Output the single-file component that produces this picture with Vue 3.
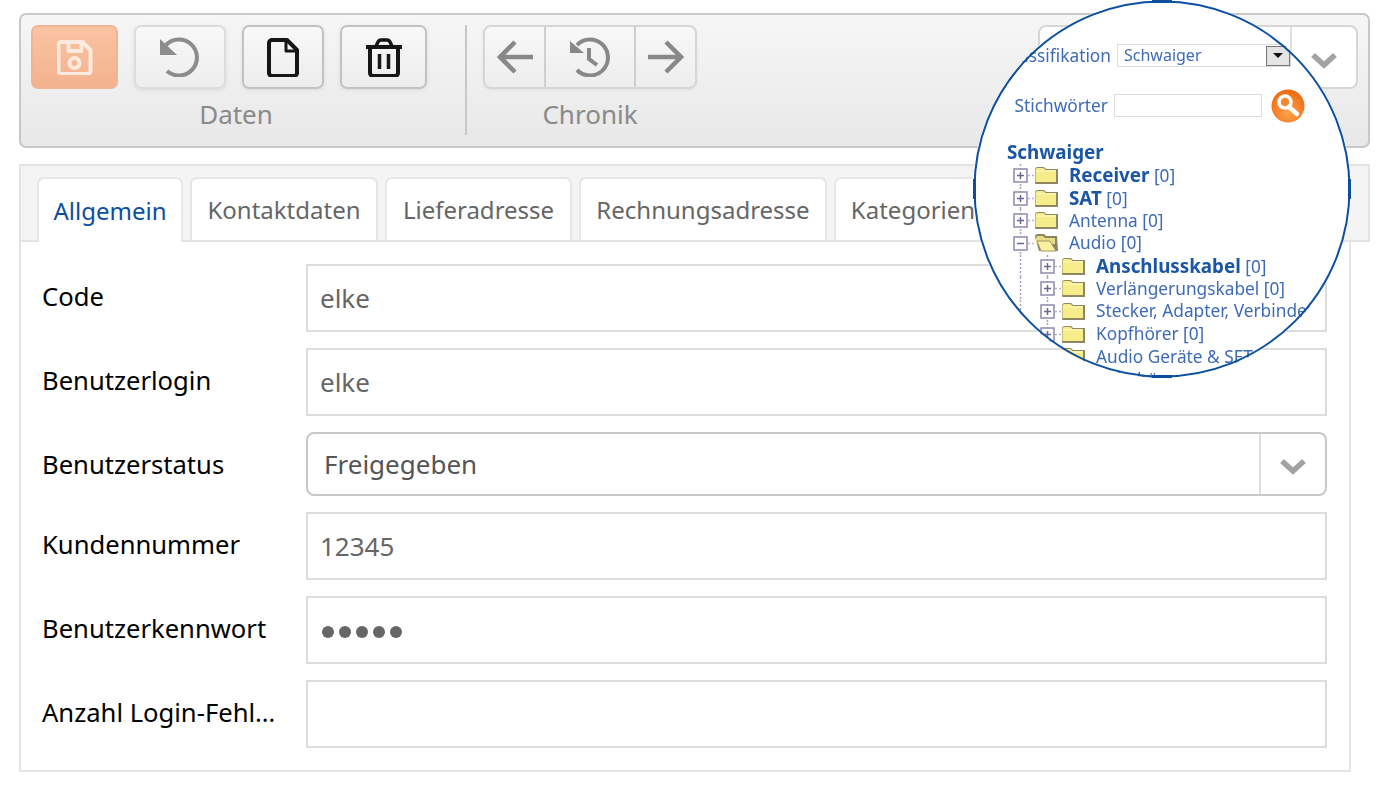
<script setup>
const tabs = [
  { label: 'Allgemein', w: 146, active: true },
  { label: 'Kontaktdaten', w: 188 },
  { label: 'Lieferadresse', w: 187 },
  { label: 'Rechnungsadresse', w: 248 },
  { label: 'Kategorien', w: 158 },
]
const rows = [
  { label: 'Code', value: 'elke', type: 'text' },
  { label: 'Benutzerlogin', value: 'elke', type: 'text' },
  { label: 'Benutzerstatus', value: 'Freigegeben', type: 'select' },
  { label: 'Kundennummer', value: '12345', type: 'text' },
  { label: 'Benutzerkennwort', value: '12345', type: 'password' },
  { label: 'Anzahl Login-Fehlversuche', value: '', type: 'text' },
]
const tree = [
  { name: 'Receiver', level: 0, bold: true },
  { name: 'SAT', level: 0, bold: true },
  { name: 'Antenna', level: 0 },
  { name: 'Audio', level: 0, open: true },
  { name: 'Anschlusskabel', level: 1, bold: true },
  { name: 'Verlängerungskabel', level: 1 },
  { name: 'Stecker, Adapter, Verbinder', level: 1, noCount: true },
  { name: 'Kopfhörer', level: 1 },
  { name: 'Audio Geräte & SET', level: 1, noCount: true },
  { name: 'Zubehör', level: 1, noCount: true },
]
</script>

<template>
  <div class="page">
    <header class="toolbar">
      <section class="group group-data">
        <div class="buttons">
          <button class="btn btn-save" aria-label="Speichern">
            <svg width="36" height="36" viewBox="0.500 -1 36 36" fill="none" stroke="#fdeadf" stroke-width="4" stroke-linejoin="round">
              <path d="M5 2h21l8 8v21a3 3 0 0 1-3 3H5a3 3 0 0 1-3-3V5a3 3 0 0 1 3-3z" />
              <path d="M12 2v9h13V2" />
              <circle cx="18" cy="23" r="5" />
            </svg>
          </button>
          <button class="btn btn-undo" aria-label="Rückgängig">
            <svg width="40" height="40" viewBox="1 -1 40 40" fill="none">
              <path d="M7 7A18 18 0 1 1 8 33" stroke="#8c8c8c" stroke-width="4" />
              <path d="M0 0v17h18z" fill="#8c8c8c" />
            </svg>
          </button>
          <button class="btn btn-new" aria-label="Neu">
            <svg width="32" height="40" viewBox="0 -1 32 40" fill="none" stroke="#161616" stroke-width="4" stroke-linejoin="round">
              <path d="M5 2h15l10 10v23a3 3 0 0 1-3 3H5a3 3 0 0 1-3-3V5a3 3 0 0 1 3-3z" />
              <path d="M19 2v11h11" stroke-width="3" />
            </svg>
          </button>
          <button class="btn btn-delete" aria-label="Löschen">
            <svg width="36" height="40" viewBox="0 -1 36 40" fill="none" stroke="#161616" stroke-width="4" stroke-linejoin="round">
              <path d="M0 9h36" />
              <path d="M10 8l2-4q1-2 3-2h6q2 0 3 2l2 4" stroke-width="3.500" />
              <path d="M4 9v26a3 3 0 0 0 3 3h22a3 3 0 0 0 3-3V9" />
              <path d="M13.500 16v15M22.500 16v15" stroke-width="3.500" />
            </svg>
          </button>
        </div>
        <div class="group-label data-label">Daten</div>
      </section>
      <div class="divider"></div>
      <section class="group group-history">
        <div class="segmented">
          <button class="seg seg-back" aria-label="Zurück">
            <svg width="36" height="36" viewBox="0 -1 36 36" fill="none" stroke="#888" stroke-width="4.500">
              <path d="M36 17H3M18 2L3 17l15 15" />
            </svg>
          </button>
          <button class="seg seg-hist" aria-label="Verlauf">
            <svg width="40" height="40" viewBox="0 -1 40 40" fill="none" stroke="#888" stroke-width="4">
              <path d="M7 7A18 18 0 1 1 7 32" />
              <path d="M0 3v12h14z" fill="#888" stroke="none" />
              <path d="M19 10v11l8 6" />
            </svg>
          </button>
          <button class="seg seg-next" aria-label="Vor">
            <svg width="36" height="36" viewBox="0 -1 36 36" fill="none" stroke="#888" stroke-width="4.500">
              <path d="M0 17h33M18 2l15 15-15 15" />
            </svg>
          </button>
        </div>
        <div class="group-label">Chronik</div>
      </section>
      <div class="combo">
        <div class="combo-arrow">
          <svg width="26" height="17" viewBox="0 0 26 17" fill="none" stroke="#a2a2a2" stroke-width="5.500">
            <path d="M2 3l11 10L24 3" />
          </svg>
        </div>
      </div>
    </header>

    <main class="panel">
      <nav class="tabbar">
        <div
          v-for="tab in tabs"
          :key="tab.label"
          class="tab"
          :class="{ active: tab.active }"
          :style="{ width: tab.w + 'px' }"
        >{{ tab.label }}</div>
      </nav>
      <form class="form">
        <div v-for="row in rows" :key="row.label" class="row" :class="{ 'row-select': row.type === 'select' }">
          <label class="label">{{ row.label }}</label>
          <div v-if="row.type === 'select'" class="select">
            <span class="select-value">{{ row.value }}</span>
            <span class="select-arrow">
              <svg width="26" height="17" viewBox="0 0 26 17" fill="none" stroke="#a2a2a2" stroke-width="5.500">
                <path d="M2 3l11 10L24 3" />
              </svg>
            </span>
          </div>
          <div v-else-if="row.type === 'password'" class="input dots">
            <i v-for="n in 5" :key="n" class="dot"></i>
          </div>
          <div v-else class="input">{{ row.value }}</div>
        </div>
      </form>
    </main>

    <aside class="lens">
      <div class="lens-clip">
        <div class="lens-form first">
          <span class="lens-label">Klassifikation</span>
          <div class="lens-select">
            <span>Schwaiger</span>
            <b class="lens-drop"><i></i></b>
          </div>
        </div>
        <div class="lens-form second">
          <span class="lens-label">Stichwörter</span>
          <div class="lens-input"></div>
          <svg class="lens-search" width="34" height="34" viewBox="0 0 34 34">
            <defs>
              <radialGradient id="searchFill" cx="50%" cy="70%" r="65%">
                <stop offset="0" stop-color="#ffa24e" />
                <stop offset="1" stop-color="#ee6d12" />
              </radialGradient>
            </defs>
            <circle cx="17" cy="17" r="16.500" fill="url(#searchFill)" />
            <circle cx="14" cy="13" r="6" fill="#f58a35" stroke="#fff" stroke-width="3.500" />
            <path d="M18 18l8 7" stroke="#fff" stroke-width="4.500" stroke-linecap="round" />
          </svg>
        </div>
        <div class="tree-root">Schwaiger</div>
        <div class="tree">
          <div v-for="node in tree" :key="node.name" class="node">
            <svg class="node-icon" :width="node.level ? 83 : 56" height="23" :viewBox="node.level ? '0 0 83 23' : '0 0 56 23'">
              <path v-if="node.level" d="M7.500 0v23" stroke="#a8a2c4" stroke-width="1.500" stroke-dasharray="2 2" />
              <g :transform="node.level ? 'translate(27 0)' : ''">
                <path d="M7.500 0v23" stroke="#a8a2c4" stroke-width="1.500" stroke-dasharray="2 2" />
                <rect x="1" y="5" width="13" height="13" fill="#fff" stroke="#8f89ac" stroke-width="1.500" />
                <path d="M4 11.500h7" stroke="#6d6790" stroke-width="1.500" />
                <path v-if="!node.open" d="M7.500 8v7" stroke="#6d6790" stroke-width="1.500" />
                <path d="M15 11.500h7" stroke="#b9b4ce" stroke-width="1.500" stroke-dasharray="2 2" />
                <template v-if="node.open">
                  <path d="M22 5q0-3 3-3h5q2 0 3 2h11l1 15H26z" fill="#8a8560" />
                  <path d="M23 7q0-3 2-3h5l2 2h10v6H23z" fill="#e9dd86" />
                  <path d="M24 9h13l6 10H28z" fill="#f9f0a2" stroke="#9b9664" stroke-width="1" />
                </template>
                <template v-else>
                  <path d="M22 6q0-3 3-3h5q2 0 3 2h12v15H23q-1 0-1-1z" fill="#8d8862" />
                  <path d="M22.500 6q0-2 2-2h5q2 0 3 2h10.500v12H22.500z" fill="#f7ec8a" />
                  <path d="M23 7h20" stroke="#fdf8c8" stroke-width="1" />
                </template>
              </g>
            </svg>
            <span class="node-text">
              <strong v-if="node.bold">{{ node.name }}</strong>
              <template v-else>{{ node.name }}</template>
              <template v-if="!node.noCount"> [0]</template>
            </span>
          </div>
        </div>
      </div>
      <svg class="lens-ring" width="378" height="378" viewBox="0 0 378 378" fill="none" stroke="#0c4f9e">
        <circle cx="189" cy="189" r="187.500" stroke-width="2" />
        <path d="M179 1.500h20M179 376.500h20" stroke-width="3" />
        <path d="M1.500 179v20M376.500 179v20" stroke-width="3" />
      </svg>
    </aside>
  </div>
</template>

<style>
html, body { margin: 0; background: #fff; }
</style>

<style scoped>
.page {
  position: relative;
  width: 1378px;
  height: 787px;
  overflow: hidden;
  padding: 13px 8px 0 19px;
  box-sizing: border-box;
  font-family: "Noto Sans", "DejaVu Sans", sans-serif;
  font-size: 26px;
}
.toolbar {
  display: flex;
  align-items: flex-start;
  height: 135px;
  box-sizing: border-box;
  padding: 10px 10px 0 10px;
  border: 2px solid #c8c8c8;
  border-radius: 7px;
  background: linear-gradient(#f6f6f6, #e8e8e8);
}
.group { display: flex; flex-direction: column; align-items: center; }
.buttons { display: flex; gap: 16px; }
.group-label {
  margin-top: 7px;
  font-size: 26px;
  line-height: 36px;
  color: #8a8a8a;
}
.data-label { padding-left: 14px; }
.btn {
  display: flex;
  align-items: center;
  justify-content: center;
  height: 64px;
  padding: 0;
  box-sizing: border-box;
  border: 2px solid #c2c2c2;
  border-radius: 7px;
  background: linear-gradient(#f8f8f8, #ededed);
  box-shadow: 0 1px 4px rgba(0, 0, 0, 0.08);
}
.btn-save { width: 87px; border-color: #f0b596; background: linear-gradient(#fac3a2, #f3b28e); box-shadow: none; }
.btn-undo { width: 92px; border-color: #dcdcdc; }
.btn-new { width: 82px; }
.btn-delete { width: 87px; }
.divider {
  width: 2px;
  height: 110px;
  margin: 0 16px 0 38px;
  background: #c8c8c8;
}
.segmented {
  display: flex;
  height: 64px;
  box-sizing: border-box;
  border: 2px solid #d6d6d6;
  border-radius: 8px;
  background: linear-gradient(#f8f8f8, #ededed);
  box-shadow: 0 1px 3px rgba(0, 0, 0, 0.06);
}
.seg {
  display: flex;
  align-items: center;
  justify-content: center;
  height: 60px;
  padding: 0;
  border: 0;
  background: transparent;
}
.seg-back { width: 61px; border-right: 2px solid #cfcfcf; }
.seg-hist { width: 90px; border-right: 2px solid #cfcfcf; }
.seg-next { width: 59px; }
.combo {
  display: flex;
  justify-content: flex-end;
  width: 320px;
  height: 64px;
  margin-left: auto;
  box-sizing: border-box;
  border: 2px solid #d6d6d6;
  border-radius: 8px;
  background: #fff;
}
.combo-arrow {
  display: flex;
  align-items: center;
  justify-content: center;
  width: 66px;
  padding-top: 6px;
  box-sizing: border-box;
  border-left: 2px solid #e0e0e0;
}
.panel {
  width: 1332px;
  height: 608px;
  margin-top: 16px;
  box-sizing: border-box;
  border: 2px solid #e4e4e4;
  border-top: 0;
}
.tabbar {
  display: flex;
  gap: 7px;
  align-items: flex-end;
  width: 1351px;
  height: 78px;
  margin: 0 -19px 0 -2px;
  box-sizing: border-box;
  padding-left: 16px;
  border: 2px solid #e4e4e4;
  background: #f4f4f4;
  font-size: 24px;
}
.tab {
  flex: none;
  display: flex;
  align-items: center;
  justify-content: center;
  height: 65px;
  margin-bottom: -2px;
  box-sizing: border-box;
  border: 2px solid #e6e6e6;
  border-bottom: 0;
  border-radius: 7px 7px 0 0;
  background: #fff;
  color: #666;
  white-space: nowrap;
}
.tab:not(.active) { border-bottom: 2px solid #e4e4e4; }
.tab.active { color: #0b4ea2; }
.form { padding: 22px 22px 0 21px; }
.row {
  display: flex;
  align-items: flex-start;
  margin-bottom: 16px;
}
.label {
  flex: none;
  width: 242px;
  margin-right: 22px;
  padding-top: 15px;
  font-size: 25.600px;
  line-height: 36px;
  color: #000;
  white-space: nowrap;
  overflow: hidden;
  text-overflow: ellipsis;
}
.input {
  flex: none;
  display: flex;
  align-items: center;
  width: 1021px;
  height: 68px;
  box-sizing: border-box;
  padding: 0 12px;
  border: 2px solid #dcdcdc;
  background: #fff;
  color: #666;
}
.dots { gap: 5px; padding: 4px 14px 0; }
.dot { width: 12px; height: 12px; border-radius: 50%; background: #666; }
.select {
  flex: none;
  display: flex;
  align-items: center;
  width: 1021px;
  height: 64px;
  box-sizing: border-box;
  border: 2px solid #c8c8c8;
  border-radius: 8px;
  background: #fff;
  color: #555;
}
.select-value { flex: 1; padding-left: 16px; }
.select-arrow {
  display: flex;
  align-items: center;
  justify-content: center;
  width: 66px;
  height: 100%;
  padding-top: 4px;
  box-sizing: border-box;
  border-left: 2px solid #e0e0e0;
}
.lens {
  position: absolute;
  left: 973px;
  top: 0;
  width: 378px;
  height: 378px;
}
.lens-clip {
  width: 378px;
  height: 378px;
  overflow: hidden;
  border-radius: 50%;
  background: #fff;
  color: #3f6bb6;
  font-size: 17.300px;
  font-family: "Noto Sans", "DejaVu Sans", sans-serif;
}
.lens-clip > * { filter: blur(0.35px); }
.lens-ring { position: absolute; left: 0; top: 0; pointer-events: none; }
.lens-form { display: flex; align-items: center; }
.lens-form.first { height: 24px; padding-top: 43px; margin-left: 8px; }
.lens-form.second { height: 24px; margin-top: 26.500px; margin-left: 5px; }
.lens-label { width: 130px; flex: none; text-align: right; margin-right: 6px; white-space: nowrap; }
.lens-select {
  position: relative;
  display: flex;
  align-items: center;
  width: 174px;
  height: 23px;
  box-sizing: border-box;
  padding-left: 6px;
  border: 1.500px solid #ddd;
  font-size: 16px;
  background: #fff;
}
.lens-drop {
  position: absolute;
  right: 0;
  top: 1px;
  display: flex;
  align-items: center;
  justify-content: center;
  width: 24px;
  height: 20px;
  box-sizing: border-box;
  border: 1.500px solid #777;
  background: #e4e4e4;
}
.lens-drop i {
  width: 0;
  height: 0;
  border-left: 5px solid transparent;
  border-right: 5px solid transparent;
  border-top: 5px solid #111;
}
.lens-input {
  width: 148px;
  height: 23px;
  box-sizing: border-box;
  border: 1.500px solid #ddd;
  background: #fff;
}
.lens-search { margin-left: 9px; flex: none; }
.tree-root {
  margin: 22.500px 0 0 34px;
  font-weight: 700;
  font-size: 18.800px;
  line-height: 24px;
  color: #1a55a6;
}
.tree { margin: 0 0 0 40px; }
.node {
  display: flex;
  align-items: center;
  height: 22.700px;
  line-height: 22px;
  white-space: nowrap;
}
.node-icon { flex: none; height: 23px; overflow: hidden; }
.node-text strong { color: #1a55a6; font-weight: 700; font-size: 18.800px; }
</style>
